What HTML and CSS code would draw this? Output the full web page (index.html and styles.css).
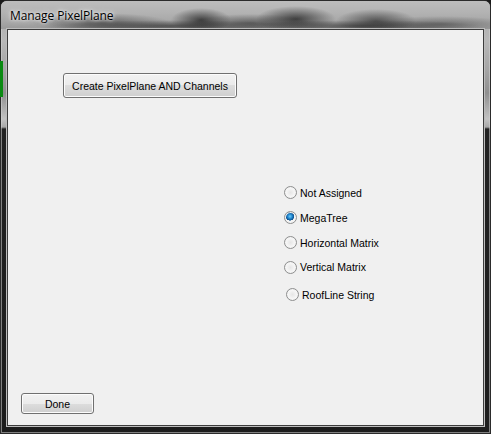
FILE: index.html
```html
<!DOCTYPE html>
<html>
<head>
<meta charset="utf-8">
<title>Manage PixelPlane</title>
<link rel="stylesheet" href="styles.css">
</head>
<body>
<div class="window">
  <div class="titlebar">
    <span class="title">Manage PixelPlane</span>
  </div>
  <div class="client">
    <button class="btn btn-create">Create PixelPlane AND Channels</button>
    <div class="radio-group">
      <label class="radio"><span class="dot"></span><span class="label">Not Assigned</span></label>
      <label class="radio checked"><span class="dot"></span><span class="label">MegaTree</span></label>
      <label class="radio"><span class="dot"></span><span class="label">Horizontal Matrix</span></label>
      <label class="radio short"><span class="dot"></span><span class="label">Vertical Matrix</span></label>
      <label class="radio roof"><span class="dot"></span><span class="label">RoofLine String</span></label>
    </div>
    <button class="btn btn-done">Done</button>
  </div>
</div>
</body>
</html>
```

FILE: styles.css
```css
html, body {
  margin: 0;
  padding: 0;
  background: #1a1a1a;
}

body {
  width: 491px;
  height: 434px;
  overflow: hidden;
}

.window {
  box-sizing: border-box;
  width: 491px;
  height: 434px;
  border: 1px solid #2b2b2b;
  border-radius: 7px 7px 0 0;
  box-shadow: inset 0 0 0 1px rgba(210, 210, 210, 0.55);
  background:
    linear-gradient(to bottom, #c4c4c4 0, #b4b4b4 28px, #b8b8b8 40px, #a4a4a4 70px, #8f8f8f 92px, #c2c2c2 118px, #a8a8a8 126px, #222 128px, #1c1c1c 100%);
  display: flex;
  flex-direction: column;
  padding: 0 6px 7px 6px;
  position: relative;
}

.window::before {
  content: "";
  position: absolute;
  left: -1px;
  top: 60px;
  width: 3px;
  height: 36px;
  background: #0a8a12;
}

.titlebar {
  height: 28px;
  flex: none;
  display: flex;
  align-items: center;
  margin: 0 -6px;
  padding-left: 9px;
  border-radius: 6px 6px 0 0;
  background:
    radial-gradient(ellipse 70px 10px at 100px 22px, rgba(40,40,40,0.55), transparent),
    radial-gradient(ellipse 30px 12px at 200px 19px, rgba(20,20,20,0.7), transparent),
    radial-gradient(ellipse 60px 9px at 250px 22px, rgba(40,40,40,0.55), transparent),
    radial-gradient(ellipse 40px 13px at 295px 18px, rgba(20,20,20,0.7), transparent),
    radial-gradient(ellipse 40px 12px at 375px 20px, rgba(25,25,25,0.6), transparent),
    radial-gradient(ellipse 70px 8px at 440px 23px, rgba(50,50,50,0.45), transparent),
    radial-gradient(ellipse 120px 6px at 170px 25px, rgba(30,30,30,0.6), transparent),
    radial-gradient(ellipse 120px 6px at 360px 25px, rgba(30,30,30,0.6), transparent),
    linear-gradient(to bottom, #bdbdbd 0, #b2b2b2 12px, #a8a8a8 20px, #9a9a9a 28px);
}

.title {
  font-family: "Open Sans", "Noto Sans", sans-serif;
  font-size: 12px;
  color: #000;
  margin-top: 0;
  letter-spacing: -0.1px;
  text-shadow: 0 0 6px rgba(255,255,255,0.9), 0 0 3px rgba(255,255,255,0.9);
}

.client {
  flex: 1;
  background: #f0f0f0;
  border: 1px solid #3c3c3c;
  box-shadow: 0 0 0 1px #bcbcbc;
  display: flex;
  flex-direction: column;
  align-items: flex-start;
  font-family: "Liberation Sans", Arial, sans-serif;
  font-size: 10.5px;
  color: #000;
}

.btn {
  font-family: "Liberation Sans", Arial, sans-serif;
  font-size: 10.5px;
  color: #000;
  border: 1px solid #707070;
  border-radius: 3px;
  background: linear-gradient(to bottom, #f2f2f2 0, #ebebeb 50%, #dddddd 50%, #cfcfcf 100%);
  box-shadow: inset 0 0 0 1px #fcfcfc;
  padding: 0;
  cursor: default;
}

.btn-create {
  width: 174px;
  height: 25px;
  margin: 43px 0 0 55px;
}

.radio-group {
  display: flex;
  flex-direction: column;
  margin: 82px 0 0 276px;
}

.radio {
  display: flex;
  align-items: center;
  height: 25px;
}

.radio.short {
  height: 24px;
}

.radio.roof {
  margin-top: 3px;
  margin-left: 2px;
}

.dot {
  box-sizing: border-box;
  width: 13px;
  height: 13px;
  border-radius: 50%;
  border: 1px solid #8e8f8f;
  background: radial-gradient(circle at 50% 50%, #e6e6e6 0, #f6f6f6 55%, #c9c9c9 100%);
  box-shadow: inset 0 0 0 1px #f4f4f4;
  margin-right: 3px;
  flex: none;
}

.radio.checked .dot {
  background:
    radial-gradient(circle at 45% 40%, #6ad0ff 0, #1d7ec7 2.5px, #0d4f8a 4px, transparent 4.3px),
    radial-gradient(circle at 50% 50%, #e6e6e6 0, #f6f6f6 55%, #c9c9c9 100%);
}

.label {
  white-space: nowrap;
}

.btn-done {
  width: 73px;
  height: 21px;
  margin: auto 0 11px 13px;
}
```
